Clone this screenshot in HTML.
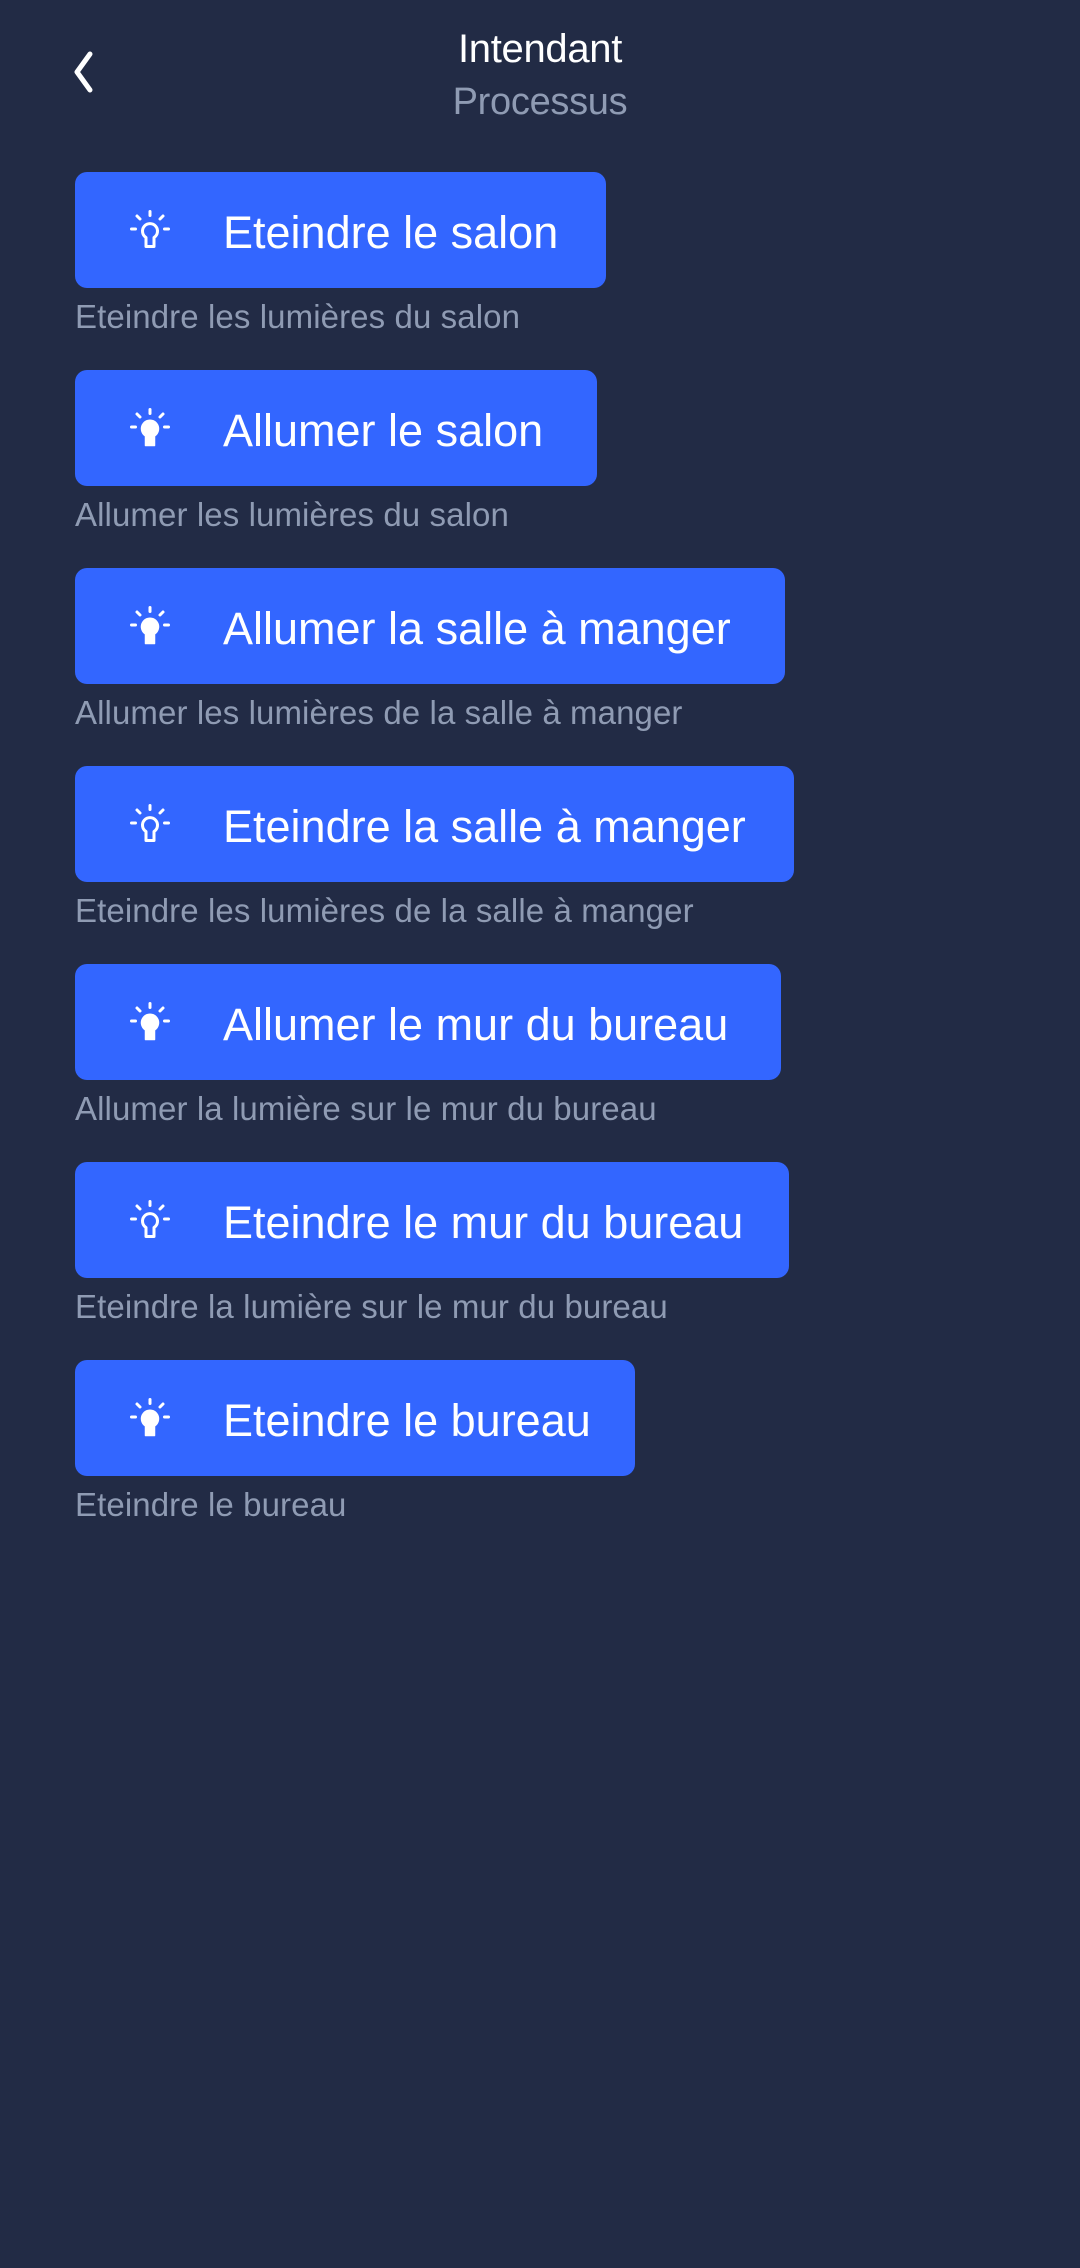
<!DOCTYPE html>
<html><head><meta charset="utf-8"><style>
*{margin:0;padding:0;box-sizing:border-box}
body{width:1080px;height:2268px;background:#222b45;font-family:"Liberation Sans",sans-serif;position:relative;overflow:hidden}
.t1{position:absolute;left:0;width:1080px;text-align:center;top:27px;font-size:40px;color:#fff;letter-spacing:-0.3px}
.t2{position:absolute;left:0;width:1080px;text-align:center;top:81px;font-size:38px;color:#8f9bb3;letter-spacing:-0.3px}
.back{position:absolute;left:68px;top:50px}
.btn{position:absolute;left:75px;height:116px;background:#3366ff;border-radius:12px}
.btn svg{position:absolute;left:55px;top:38px}
.btn span{position:absolute;left:148px;top:3px;line-height:116px;font-size:45px;color:#fff;letter-spacing:0;white-space:nowrap}
.sub{position:absolute;left:75px;font-size:33px;color:#8f9bb3;letter-spacing:0.1px;white-space:nowrap}
</style></head><body>
<svg class="back" width="30" height="44" viewBox="0 0 30 44"><path d="M22 4 L9 22 L22 40" fill="none" stroke="#fff" stroke-width="5" stroke-linecap="round" stroke-linejoin="round"/></svg>
<div class="t1">Intendant</div>
<div class="t2">Processus</div>

<svg width="0" height="0" style="position:absolute">
<defs>
<g id="rays" stroke="#fff" stroke-width="3" stroke-linecap="round"><line x1="20" y1="1.5" x2="20" y2="5.5"/><line x1="7" y1="6" x2="10" y2="9"/><line x1="33" y1="6" x2="30" y2="9"/><line x1="1.5" y1="19" x2="5.5" y2="19"/><line x1="34.5" y1="19" x2="38.5" y2="19"/></g>
</defs></svg>

<div class="btn" style="top:172px;width:531px"><svg width="40" height="40" viewBox="0 0 40 40"><use href="#rays"/><path d="M16 36.5 V27.5 A7.5 7.5 0 1 1 24 27.5 V36.5 Z" fill="none" stroke="#fff" stroke-width="3" stroke-linejoin="round"/></svg><span>Eteindre le salon</span></div>
<div class="sub" style="top:298px">Eteindre les lumières du salon</div>

<div class="btn" style="top:370px;width:522px"><svg width="40" height="40" viewBox="0 0 40 40"><use href="#rays"/><path d="M15.5 37.5 V28 A8.5 8.5 0 1 1 24.5 28 V37.5 Z" fill="#fff" stroke="#fff" stroke-width="1.5" stroke-linejoin="round"/></svg><span>Allumer le salon</span></div>
<div class="sub" style="top:496px">Allumer les lumières du salon</div>

<div class="btn" style="top:568px;width:710px"><svg width="40" height="40" viewBox="0 0 40 40"><use href="#rays"/><path d="M15.5 37.5 V28 A8.5 8.5 0 1 1 24.5 28 V37.5 Z" fill="#fff" stroke="#fff" stroke-width="1.5" stroke-linejoin="round"/></svg><span>Allumer la salle à manger</span></div>
<div class="sub" style="top:694px">Allumer les lumières de la salle à manger</div>

<div class="btn" style="top:766px;width:719px"><svg width="40" height="40" viewBox="0 0 40 40"><use href="#rays"/><path d="M16 36.5 V27.5 A7.5 7.5 0 1 1 24 27.5 V36.5 Z" fill="none" stroke="#fff" stroke-width="3" stroke-linejoin="round"/></svg><span>Eteindre la salle à manger</span></div>
<div class="sub" style="top:892px">Eteindre les lumières de la salle à manger</div>

<div class="btn" style="top:964px;width:706px"><svg width="40" height="40" viewBox="0 0 40 40"><use href="#rays"/><path d="M15.5 37.5 V28 A8.5 8.5 0 1 1 24.5 28 V37.5 Z" fill="#fff" stroke="#fff" stroke-width="1.5" stroke-linejoin="round"/></svg><span>Allumer le mur du bureau</span></div>
<div class="sub" style="top:1090px">Allumer la lumière sur le mur du bureau</div>

<div class="btn" style="top:1162px;width:714px"><svg width="40" height="40" viewBox="0 0 40 40"><use href="#rays"/><path d="M16 36.5 V27.5 A7.5 7.5 0 1 1 24 27.5 V36.5 Z" fill="none" stroke="#fff" stroke-width="3" stroke-linejoin="round"/></svg><span>Eteindre le mur du bureau</span></div>
<div class="sub" style="top:1288px">Eteindre la lumière sur le mur du bureau</div>

<div class="btn" style="top:1360px;width:560px"><svg width="40" height="40" viewBox="0 0 40 40"><use href="#rays"/><path d="M15.5 37.5 V28 A8.5 8.5 0 1 1 24.5 28 V37.5 Z" fill="#fff" stroke="#fff" stroke-width="1.5" stroke-linejoin="round"/></svg><span>Eteindre le bureau</span></div>
<div class="sub" style="top:1486px">Eteindre le bureau</div>
</body></html>
